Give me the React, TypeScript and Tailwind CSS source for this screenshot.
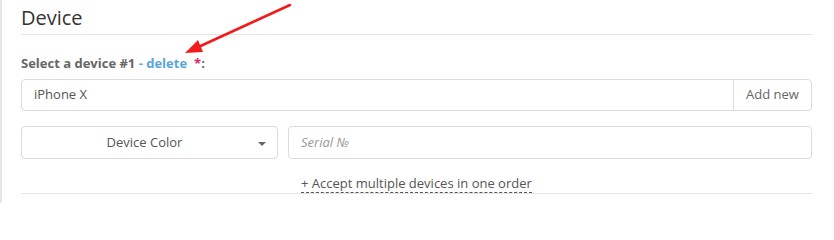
import React from 'react'

// Device section of an order form
export default function App() {
  return (
    <div
      className="relative h-[203px] w-[834px] overflow-hidden border-l-2 border-[#e6e6e6] bg-white pl-[19px] pr-[22px]"
      style={{ fontFamily: '"Open Sans", "Noto Sans", sans-serif' }}
    >
      {/* heading */}
      <div className="border-b border-[#e5e5e5] pb-[2px] pt-[4px] text-[20px] leading-[28px] text-[#333]">
        Device
      </div>

      {/* label */}
      <div className="mt-[19px] text-[13px] font-bold leading-[18px] text-[#666]">
        Select a device #1{' '}
        <span className="text-[#5aa6d9]">- delete</span>
        <span className="ml-[7px] text-[#e0245e]">*</span>:
      </div>

      {/* device input with addon */}
      <div className="mt-[7px] flex h-[32px] rounded-[4px] border border-[#dcdcdc] text-[13px] text-[#555]">
        <div className="flex flex-1 items-center pl-[12px]">iPhone X</div>
        <div className="flex w-[78px] items-center justify-center border-l border-[#dcdcdc] text-[#666]">
          Add new
        </div>
      </div>

      {/* color + serial */}
      <div className="mt-[15px] flex gap-[10px]">
        <div className="relative flex h-[33px] w-[257px] items-center justify-center rounded-[4px] border border-[#dcdcdc] pr-[10px] text-[13px] text-[#555]">
          Device Color
          <span className="absolute right-[11px] top-[15px] h-0 w-0 border-l-[4px] border-r-[4px] border-t-[4px] border-l-transparent border-r-transparent border-t-[#666]" />
        </div>
        <div className="flex h-[33px] flex-1 items-center rounded-[4px] border border-[#dcdcdc] pl-[12px] text-[13px] italic text-[#999]">
          Serial №
        </div>
      </div>

      {/* accept multiple */}
      <div className="mt-[16px] flex h-[19px] border-b border-[#e5e5e5] pl-[280px]">
        <span className="border-b border-dashed border-[#555] text-[13px] leading-[17px] text-[#555]">
          + Accept multiple devices in one order
        </span>
      </div>

      {/* red arrow annotation */}
      <svg className="absolute left-0 top-0" width="834" height="203">
        <line x1="288" y1="5" x2="192" y2="49" stroke="#ee1c1c" strokeWidth="2.5" strokeLinecap="round" />
        <polygon points="183,53 196,40 201,52" fill="#ee1c1c" />
      </svg>
    </div>
  )
}
